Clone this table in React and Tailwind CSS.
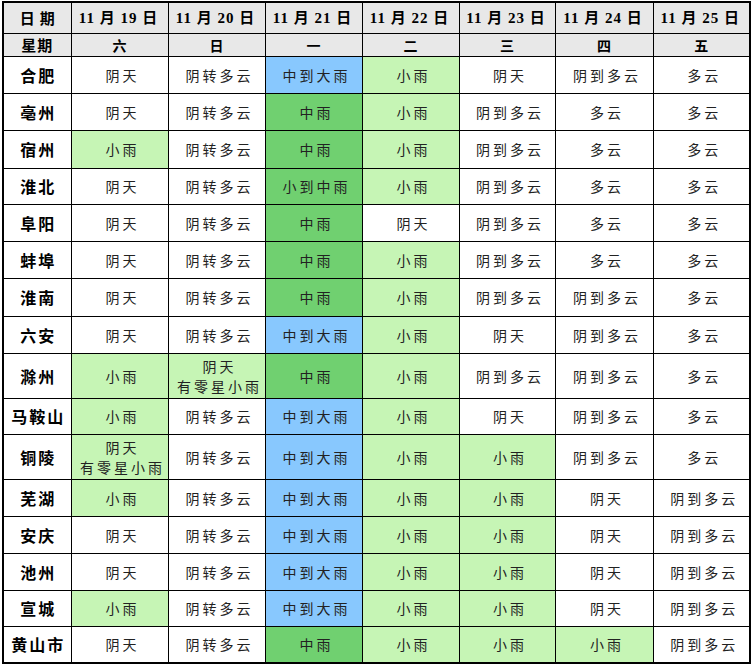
const W = '';
const L = 'bg-[#c6f5b5]';
const M = 'bg-[#70d070]';
const B = 'bg-[#88c8fe]';

const DATES = ['11 月 19 日', '11 月 20 日', '11 月 21 日', '11 月 22 日', '11 月 23 日', '11 月 24 日', '11 月 25 日'];
const WEEK = ['六', '日', '一', '二', '三', '四', '五'];

const RAIN2 = ['阴天', '有零星小雨'];

const ROWS = [
  ['合肥', 37, [['阴天', W], ['阴转多云', W], ['中到大雨', B], ['小雨', L], ['阴天', W], ['阴到多云', W], ['多云', W]]],
  ['亳州', 37, [['阴天', W], ['阴转多云', W], ['中雨', M], ['小雨', L], ['阴到多云', W], ['多云', W], ['多云', W]]],
  ['宿州', 38, [['小雨', L], ['阴转多云', W], ['中雨', M], ['小雨', L], ['阴到多云', W], ['多云', W], ['多云', W]]],
  ['淮北', 36, [['阴天', W], ['阴转多云', W], ['小到中雨', M], ['小雨', L], ['阴到多云', W], ['多云', W], ['多云', W]]],
  ['阜阳', 37, [['阴天', W], ['阴转多云', W], ['中雨', M], ['阴天', W], ['阴到多云', W], ['多云', W], ['多云', W]]],
  ['蚌埠', 37, [['阴天', W], ['阴转多云', W], ['中雨', M], ['小雨', L], ['阴到多云', W], ['多云', W], ['多云', W]]],
  ['淮南', 38, [['阴天', W], ['阴转多云', W], ['中雨', M], ['小雨', L], ['阴到多云', W], ['阴到多云', W], ['多云', W]]],
  ['六安', 37, [['阴天', W], ['阴转多云', W], ['中到大雨', B], ['小雨', L], ['阴天', W], ['阴到多云', W], ['多云', W]]],
  ['滁州', 45, [['小雨', L], [RAIN2, L], ['中雨', M], ['小雨', L], ['阴到多云', W], ['阴到多云', W], ['多云', W]]],
  ['马鞍山', 36, [['小雨', L], ['阴转多云', W], ['中到大雨', B], ['小雨', L], ['阴天', W], ['阴到多云', W], ['多云', W]]],
  ['铜陵', 45, [[RAIN2, L], ['阴转多云', W], ['中到大雨', B], ['小雨', L], ['小雨', L], ['阴到多云', W], ['多云', W]]],
  ['芜湖', 37, [['小雨', L], ['阴转多云', W], ['中到大雨', B], ['小雨', L], ['小雨', L], ['阴天', W], ['阴到多云', W]]],
  ['安庆', 37, [['阴天', W], ['阴转多云', W], ['中到大雨', B], ['小雨', L], ['小雨', L], ['阴天', W], ['阴到多云', W]]],
  ['池州', 37, [['阴天', W], ['阴转多云', W], ['中到大雨', B], ['小雨', L], ['小雨', L], ['阴天', W], ['阴到多云', W]]],
  ['宣城', 36, [['小雨', L], ['阴转多云', W], ['中到大雨', B], ['小雨', L], ['小雨', L], ['阴天', W], ['阴到多云', W]]],
  ['黄山市', 37, [['阴天', W], ['阴转多云', W], ['中雨', M], ['小雨', L], ['小雨', L], ['小雨', L], ['阴到多云', W]]],
];

const COLS = [68, 97, 97, 97, 97, 96, 98, 97];

export default function App() {
  return (
    <div className="w-[754px] h-[671px] bg-white pl-[2px] pt-[1px]" style={{ fontFamily: '"Noto Sans CJK SC", "Liberation Serif", serif' }}>
      <table className="table-fixed border-collapse border-2 border-black w-[749px]">
        <colgroup>
          {COLS.map((w, i) => <col key={i} style={{ width: w }} />)}
        </colgroup>
        <thead>
          <tr className="h-[31px] bg-[#e8e8e8]">
            <th className="border border-black text-[15px] font-bold tracking-[5px] text-black p-0 pl-[5px]">日期</th>
            {DATES.map(d => (
              <th key={d} className="border border-black text-[15px] font-bold tracking-[1px] text-black p-0 pr-[2px] whitespace-pre" style={{ fontFamily: '"Liberation Serif", "Noto Sans CJK SC", serif' }}>{d}</th>
            ))}
          </tr>
          <tr className="h-[23px] bg-[#e8e8e8]">
            <th className="border border-black text-[15px] font-bold tracking-[1px] text-black p-0 leading-none">星期</th>
            {WEEK.map(d => (
              <th key={d} className="border border-black text-[14px] font-bold text-black p-0 leading-none">{d}</th>
            ))}
          </tr>
        </thead>
        <tbody>
          {ROWS.map(([city, h, cells]) => (
            <tr key={city} style={{ height: h }}>
              <td className="border border-black text-center text-[16px] font-bold tracking-[2px] text-black p-0 pl-[2px]">{city}</td>
              {cells.map(([txt, bg], i) => (
                <td key={i} className={`border border-black text-center text-[14px] tracking-[3px] text-[#222] p-0 pl-[6px] leading-[20px] ${bg}`}>
                  {Array.isArray(txt) ? (
                    <div className="flex flex-col items-center">
                      <span>{txt[0]}</span>
                      <span>{txt[1]}</span>
                    </div>
                  ) : txt}
                </td>
              ))}
            </tr>
          ))}
        </tbody>
      </table>
    </div>
  );
}
